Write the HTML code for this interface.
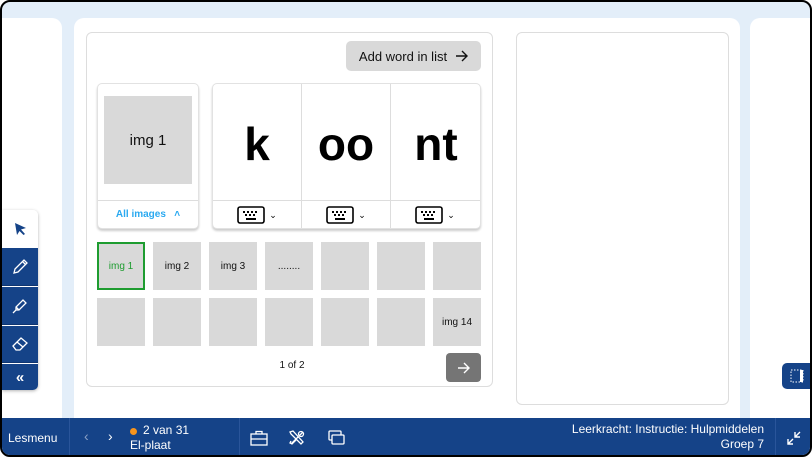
<!DOCTYPE html>
<html><head><style>
*{box-sizing:border-box;margin:0;padding:0}
body{width:812px;height:457px;background:#fff;font-family:"Liberation Sans",sans-serif;overflow:hidden}
#scr{position:absolute;left:0;top:0;width:812px;height:457px;border:2px solid #000;border-radius:10px;background:#e3eef9;overflow:hidden}
.p{position:absolute;background:#fff}
.g{position:absolute;background:#d9d9d9;display:flex;align-items:center;justify-content:center;font-size:10px;color:#111}
.bar{position:absolute;left:0;top:416px;width:808px;height:39px;background:#154388;color:#fff}
.tb{position:absolute;left:0;width:36px;background:#154388;display:flex;align-items:center;justify-content:center}
.kb{position:absolute;top:200px;width:88px;height:26px;display:flex;align-items:center;justify-content:center;gap:4px}
.big{position:absolute;top:112px;text-align:center;font-size:46px;color:#000;line-height:60px;font-weight:bold}
</style></head><body><div id="scr">
<div class="p" style="left:0;top:16px;width:60px;height:400px;border-radius:0 10px 0 0"></div>
<div class="p" style="left:72px;top:16px;width:666px;height:400px;border-radius:10px 10px 0 0"></div>
<div class="p" style="left:748px;top:16px;width:62px;height:400px;border-radius:10px 0 0 0"></div>

<div class="p" style="left:84px;top:30px;width:407px;height:355px;border:1px solid #ddd;border-radius:6px"></div>
<div class="p" style="left:514px;top:30px;width:213px;height:373px;border:1px solid #ddd;border-radius:6px"></div>

<div style="position:absolute;left:344px;top:39px;width:135px;height:30px;background:#d9d9d9;border-radius:5px;font-size:13px;color:#111;display:flex;align-items:center;justify-content:center;gap:8px">Add word in list <svg width="13" height="12"><path d="M1 6 H12 M7 1 L12 6 L7 11" fill="none" stroke="#111" stroke-width="1.4"/></svg></div>

<div class="p" style="left:95px;top:81px;width:102px;height:146px;border:1px solid #e2e2e2;border-radius:5px;box-shadow:0 2px 2px rgba(0,0,0,.2)"></div>
<div class="g" style="left:102px;top:94px;width:88px;height:88px;font-size:15px">img 1</div>
<div style="position:absolute;left:96px;top:198px;width:100px;border-top:1px solid #ddd;height:28px;color:#2aa9f0;font-size:10px;font-weight:bold;display:flex;align-items:center;justify-content:center">All images &nbsp;&nbsp;<b>˄</b></div>

<div class="p" style="left:210px;top:81px;width:269px;height:146px;border:1px solid #e2e2e2;border-radius:5px;box-shadow:0 2px 2px rgba(0,0,0,.2)"></div>
<div style="position:absolute;left:299px;top:82px;width:1px;height:144px;background:#ddd"></div>
<div style="position:absolute;left:388px;top:82px;width:1px;height:144px;background:#ddd"></div>
<div style="position:absolute;left:211px;top:198px;width:267px;height:1px;background:#ddd"></div>
<div class="big" style="left:211px;width:88px">k</div>
<div class="big" style="left:300px;width:88px">oo</div>
<div class="big" style="left:389px;width:90px">nt</div>
<div class="kb" style="left:211px"><svg width="28" height="18"><rect x="1" y="1" width="26" height="16" rx="2" fill="none" stroke="#000" stroke-width="1.6"/><g fill="#000"><rect x="6" y="5" width="2" height="2"/><rect x="10" y="5" width="2" height="2"/><rect x="14" y="5" width="2" height="2"/><rect x="18" y="5" width="2" height="2"/><rect x="8" y="8" width="2" height="2"/><rect x="12" y="8" width="2" height="2"/><rect x="16" y="8" width="2" height="2"/><rect x="9" y="12" width="10" height="2"/></g></svg><span style="font-size:9px">⌄</span></div>
<div class="kb" style="left:300px"><svg width="28" height="18"><rect x="1" y="1" width="26" height="16" rx="2" fill="none" stroke="#000" stroke-width="1.6"/><g fill="#000"><rect x="6" y="5" width="2" height="2"/><rect x="10" y="5" width="2" height="2"/><rect x="14" y="5" width="2" height="2"/><rect x="18" y="5" width="2" height="2"/><rect x="8" y="8" width="2" height="2"/><rect x="12" y="8" width="2" height="2"/><rect x="16" y="8" width="2" height="2"/><rect x="9" y="12" width="10" height="2"/></g></svg><span style="font-size:9px">⌄</span></div>
<div class="kb" style="left:389px"><svg width="28" height="18"><rect x="1" y="1" width="26" height="16" rx="2" fill="none" stroke="#000" stroke-width="1.6"/><g fill="#000"><rect x="6" y="5" width="2" height="2"/><rect x="10" y="5" width="2" height="2"/><rect x="14" y="5" width="2" height="2"/><rect x="18" y="5" width="2" height="2"/><rect x="8" y="8" width="2" height="2"/><rect x="12" y="8" width="2" height="2"/><rect x="16" y="8" width="2" height="2"/><rect x="9" y="12" width="10" height="2"/></g></svg><span style="font-size:9px">⌄</span></div>

<div class="g" style="left:95px;top:240px;width:48px;height:48px;border:2px solid #1e9c30;color:#1e9c30">img 1</div>
<div class="g" style="left:151px;top:240px;width:48px;height:48px">img 2</div>
<div class="g" style="left:207px;top:240px;width:48px;height:48px">img 3</div>
<div class="g" style="left:263px;top:240px;width:48px;height:48px">........</div>
<div class="g" style="left:319px;top:240px;width:48px;height:48px"></div>
<div class="g" style="left:375px;top:240px;width:48px;height:48px"></div>
<div class="g" style="left:431px;top:240px;width:48px;height:48px"></div>
<div class="g" style="left:95px;top:296px;width:48px;height:48px"></div>
<div class="g" style="left:151px;top:296px;width:48px;height:48px"></div>
<div class="g" style="left:207px;top:296px;width:48px;height:48px"></div>
<div class="g" style="left:263px;top:296px;width:48px;height:48px"></div>
<div class="g" style="left:319px;top:296px;width:48px;height:48px"></div>
<div class="g" style="left:375px;top:296px;width:48px;height:48px"></div>
<div class="g" style="left:431px;top:296px;width:48px;height:48px">img 14</div>
<div style="position:absolute;left:250px;top:358px;width:80px;text-align:center;font-size:10px;color:#111">1 of 2</div>
<div style="position:absolute;left:444px;top:351px;width:35px;height:29px;background:#757575;border-radius:4px;display:flex;align-items:center;justify-content:center"><svg width="13" height="12"><path d="M1 6 H12 M7 1 L12 6 L7 11" fill="none" stroke="#fff" stroke-width="1.4"/></svg></div>

<div style="position:absolute;left:0;top:208px;width:36px;height:180px;border-radius:0 5px 5px 0;overflow:hidden;box-shadow:0 1px 3px rgba(0,0,0,.3)">
<div class="tb" style="top:0;height:38px;background:#fff"><svg width="14" height="14"><path d="M2 1 L13 6 L8 7.5 L12 12 L10.5 13 L6.5 9 L4 13 Z" fill="#154388"/></svg></div>
<div class="tb" style="top:38px;height:38px;border-bottom:1px solid #0f3570"><svg width="18" height="18"><path d="M3 15 L4 11 L13 2 L16 5 L7 14 Z M11.5 3.5 L14.5 6.5" fill="none" stroke="#fff" stroke-width="1.3"/></svg></div>
<div class="tb" style="top:77px;height:38px;border-bottom:1px solid #0f3570"><svg width="18" height="18"><path d="M2 16 L5 13 L5 10 L12 3 L15 6 L8 13 L5 13 M5 10 L8 13" fill="none" stroke="#fff" stroke-width="1.3"/></svg></div>
<div class="tb" style="top:116px;height:37px;border-bottom:1px solid #0f3570"><svg width="18" height="18"><path d="M2 11 L10 3 L16 8 L9 15 L5 15 Z M6 7 L12 12" fill="none" stroke="#fff" stroke-width="1.3"/></svg></div>
<div class="tb" style="top:154px;height:26px;color:#fff;font-size:15px;font-weight:bold">«</div>
</div>

<div style="position:absolute;left:780px;top:361px;width:30px;height:26px;background:#154388;border-radius:5px 0 0 5px;display:flex;align-items:center;justify-content:center"><svg width="14" height="14"><rect x="1" y="1" width="12" height="12" fill="none" stroke="#fff" stroke-dasharray="1.5 1.5"/><rect x="10" y="1" width="3" height="12" fill="#fff"/></svg></div>

<div class="bar">
<div style="position:absolute;left:6px;top:13px;font-size:12px">Lesmenu</div>
<div style="position:absolute;left:67px;top:0;width:1px;height:39px;background:#2a559a"></div>
<div style="position:absolute;left:82px;top:10px;font-size:14px;color:#8da3c7">‹</div>
<div style="position:absolute;left:106px;top:10px;font-size:14px">›</div>
<div style="position:absolute;left:128px;top:10px;width:7px;height:7px;border-radius:50%;background:#f7941d"></div>
<div style="position:absolute;left:141px;top:5px;font-size:12px">2 van 31</div>
<div style="position:absolute;left:128px;top:20px;font-size:12px">El-plaat</div>
<div style="position:absolute;left:237px;top:0;width:1px;height:39px;background:#2a559a"></div>
<svg style="position:absolute;left:248px;top:12px" width="18" height="16"><rect x="1" y="4" width="16" height="11" fill="none" stroke="#fff" stroke-width="1.3"/><path d="M6 4 V1.5 H12 V4 M1 9 H17" fill="none" stroke="#fff" stroke-width="1.3"/></svg>
<svg style="position:absolute;left:286px;top:11px" width="18" height="18"><path d="M3 15 L10 8 M11 7 L15 3 M2 3 L5 2 L15 13 L13 15 L3 5 Z M8 11 L4 15 L2 14 L3 12" fill="none" stroke="#fff" stroke-width="1.3"/><circle cx="13" cy="5" r="2.5" fill="none" stroke="#fff" stroke-width="1.3"/></svg>
<svg style="position:absolute;left:326px;top:12px" width="18" height="16"><rect x="1" y="1" width="12" height="9" rx="1" fill="none" stroke="#fff" stroke-width="1.3"/><rect x="4" y="5" width="12" height="9" rx="1" fill="#154388" stroke="#fff" stroke-width="1.3"/></svg>
<div style="position:absolute;right:46px;top:4px;font-size:12px;text-align:right;line-height:15px">Leerkracht: Instructie: Hulpmiddelen<br>Groep 7</div>
<div style="position:absolute;left:773px;top:0;width:1px;height:39px;background:#2a559a"></div>
<svg style="position:absolute;left:784px;top:12px" width="16" height="16"><path d="M2 14 L7 9 M2 9 V14 H7 M14 2 L9 7 M9 2 V7 H14" fill="none" stroke="#fff" stroke-width="1.4"/></svg>
</div>
</div></body></html>
